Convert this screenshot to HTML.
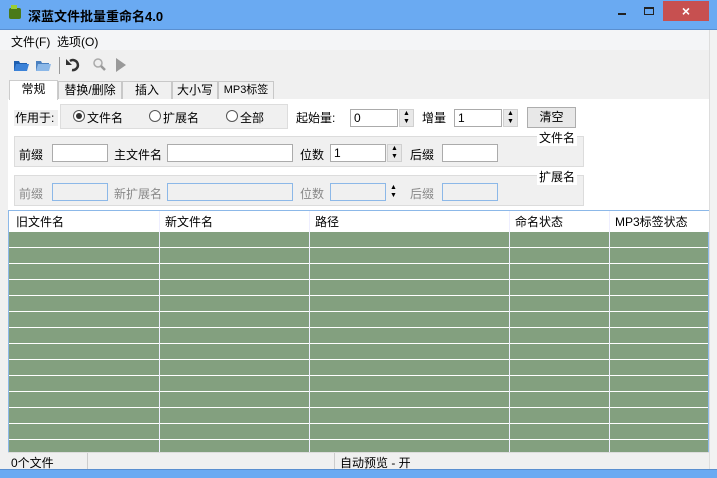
<!DOCTYPE html>
<html><head><meta charset="utf-8"><style>
*{margin:0;padding:0;box-sizing:border-box}
body{width:717px;height:478px;overflow:hidden;background:#f0f0f0;font-family:"Liberation Sans","Noto Sans CJK SC","WenQuanYi Zen Hei",sans-serif;font-size:12px;color:#000;position:relative}
.a{position:absolute}
.title{left:0;top:0;width:717px;height:30px;background:#6aaaf2;border-bottom:1px solid #5a8fd0}
.inp{position:absolute;height:18px;background:#fff;border:1px solid #ababab;padding-left:3px;line-height:16px;font-size:12px}
.dis{background:#f0f0f0;border-color:#8cb8e8}
.spin{position:absolute;width:15px;height:18px;background:#e8e8e8;border:1px solid #d0d0d0;font-size:7px;text-align:center;line-height:8px}
.grp{position:absolute;border:1px solid #dcdcdc}
.gl{color:#888}
.tab{position:absolute;top:81px;height:18px;border:1px solid #c8c8c8;border-bottom:none;background:#f0f0f0;text-align:center;line-height:17px}
</style></head><body>
<div class="a title"></div>
<div class="a" style="left:9px;top:8px;width:12px;height:11px;background:#4a7a18;border-radius:2px"></div>
<div class="a" style="left:11px;top:5px;width:6px;height:4px;background:#9acd32"></div>
<div class="a" style="left:28px;top:6px;font-size:13px;font-weight:bold">深蓝文件批量重命名4.0</div>
<div class="a" style="left:618px;top:13px;width:8px;height:2px;background:#222"></div>
<div class="a" style="left:644px;top:7px;width:10px;height:8px;border:1px solid #222;border-top-width:2px"></div>
<div class="a" style="left:663px;top:1px;width:46px;height:20px;background:#c75050;color:#fff;text-align:center;font-size:14px;line-height:20px;font-weight:bold">×</div>
<div class="a" style="left:0;top:30px;width:709px;height:20px;background:#f4f5f7"></div>
<div class="a" style="left:709px;top:30px;width:8px;height:448px;background:#f2f2f2;border-left:1px solid #ddd"></div>
<div class="a" style="left:11px;top:33px">文件(F)&nbsp;&nbsp;选项(O)</div>
<svg class="a" style="left:12px;top:55px" width="120" height="20">
<path d="M2 6h5l1 2h7v8H2z" fill="#1e5fb0"/><path d="M4 9h13l-2 7H2z" fill="#3c82d8"/>
<path d="M24 6h5l1 2h7v8H24z" fill="#4a80c0"/><path d="M26 9h13l-2 7H24z" fill="#8cb8e8"/>
<rect x="47" y="2" width="1" height="17" fill="#999"/>
<path d="M58 6 a5 5 0 1 1 2 9" stroke="#333" stroke-width="2.5" fill="none"/><path d="M54 4v6h6z" fill="#333"/>
<circle cx="86" cy="8" r="4" stroke="#aaa" stroke-width="1.5" fill="#eee"/><path d="M89 11l4 4" stroke="#999" stroke-width="2.5"/>
<path d="M104 3l10 7-10 7z" fill="#999"/>
</svg>
<div class="a" style="left:8px;top:99px;width:701px;height:111px;background:#fff"></div>
<div class="tab" style="left:9px;top:80px;width:49px;height:20px;background:#fff;border-color:#ccc">常规</div>
<div class="tab" style="left:58px;width:64px">替换/删除</div>
<div class="tab" style="left:122px;width:50px">插入</div>
<div class="tab" style="left:172px;width:46px">大小写</div>
<div class="tab" style="left:218px;width:56px;font-size:11px">MP3标签</div>
<div class="a" style="left:14px;top:110px;width:44px;height:16px;background:#f0f0f0"></div>
<div class="a" style="left:15px;top:109px">作用于:</div>
<div class="a" style="left:60px;top:104px;width:228px;height:25px;background:#f0f0f0;border:1px solid #ddd"></div>
<div class="a" style="left:73px;top:110px;width:12px;height:12px;border:1px solid #555;border-radius:50%;background:#fff"></div>
<div class="a" style="left:76px;top:113px;width:6px;height:6px;border-radius:50%;background:#333"></div>
<div class="a" style="left:87px;top:109px">文件名</div>
<div class="a" style="left:149px;top:110px;width:12px;height:12px;border:1px solid #555;border-radius:50%;background:#fff"></div>
<div class="a" style="left:163px;top:109px">扩展名</div>
<div class="a" style="left:226px;top:110px;width:12px;height:12px;border:1px solid #555;border-radius:50%;background:#fff"></div>
<div class="a" style="left:240px;top:109px">全部</div>
<div class="a" style="left:296px;top:109px">起始量:</div>
<div class="inp" style="left:350px;top:109px;width:48px">0</div>
<div class="spin" style="left:399px;top:109px">▲<br>▼</div>
<div class="a" style="left:422px;top:109px">增量</div>
<div class="inp" style="left:454px;top:109px;width:48px">1</div>
<div class="spin" style="left:503px;top:109px">▲<br>▼</div>
<div class="a" style="left:527px;top:107px;width:49px;height:21px;border:1px solid #adadad;background:#e8e8e8;text-align:center;line-height:19px">清空</div>
<div class="grp" style="left:14px;top:136px;width:570px;height:31px;background:#f0f0f0"></div>
<div class="a" style="left:537px;top:129px;background:#fff;padding:0 2px">文件名</div>
<div class="a" style="left:19px;top:146px">前缀</div>
<div class="inp" style="left:52px;top:144px;width:56px"></div>
<div class="a" style="left:114px;top:146px">主文件名</div>
<div class="inp" style="left:167px;top:144px;width:126px"></div>
<div class="a" style="left:300px;top:146px">位数</div>
<div class="inp" style="left:330px;top:144px;width:56px">1</div>
<div class="spin" style="left:387px;top:144px">▲<br>▼</div>
<div class="a" style="left:410px;top:146px">后缀</div>
<div class="inp" style="left:442px;top:144px;width:56px"></div>
<div class="grp" style="left:14px;top:175px;width:570px;height:31px;background:#f0f0f0"></div>
<div class="a" style="left:537px;top:168px;background:#fff;padding:0 2px">扩展名</div>
<div class="a gl" style="left:19px;top:185px">前缀</div>
<div class="inp dis" style="left:52px;top:183px;width:56px"></div>
<div class="a gl" style="left:114px;top:185px">新扩展名</div>
<div class="inp dis" style="left:167px;top:183px;width:126px"></div>
<div class="a gl" style="left:300px;top:185px">位数</div>
<div class="inp dis" style="left:330px;top:183px;width:56px"></div>
<div class="a" style="left:390px;top:184px;font-size:7px;line-height:8px">▲<br>▼</div>
<div class="a gl" style="left:410px;top:185px">后缀</div>
<div class="inp dis" style="left:442px;top:183px;width:56px"></div>
<div class="a" style="left:8px;top:210px;width:701px;height:242px;border:1px solid #8cb8e8;border-bottom:none;background:repeating-linear-gradient(#fff 0 1px,#83a07f 1px 16px);background-position:0 20px;background-size:100% 16px"></div>
<div class="a" style="left:9px;top:211px;width:700px;height:20px;background:#fff;border-bottom:1px solid #ddd"></div>
<div class="a" style="left:9px;top:230px;width:700px;height:2px;background:#fff"></div>
<div class="a" style="left:159px;top:211px;width:1px;height:241px;background:#eef"></div>
<div class="a" style="left:309px;top:211px;width:1px;height:241px;background:#eef"></div>
<div class="a" style="left:509px;top:211px;width:1px;height:241px;background:#eef"></div>
<div class="a" style="left:609px;top:211px;width:1px;height:241px;background:#eef"></div>
<div class="a" style="left:16px;top:213px">旧文件名</div>
<div class="a" style="left:165px;top:213px">新文件名</div>
<div class="a" style="left:315px;top:213px">路径</div>
<div class="a" style="left:515px;top:213px">命名状态</div>
<div class="a" style="left:615px;top:213px">MP3标签状态</div>
<div class="a" style="left:8px;top:452px;width:701px;height:17px;background:#f0f0f0;border-top:1px solid #ddd"></div>
<div class="a" style="left:87px;top:453px;width:1px;height:16px;background:#ccc"></div>
<div class="a" style="left:334px;top:453px;width:1px;height:16px;background:#ccc"></div>
<div class="a" style="left:11px;top:454px">0个文件</div>
<div class="a" style="left:340px;top:454px">自动预览 - 开</div>
<div class="a" style="left:0;top:469px;width:717px;height:9px;background:#6aaaf2;border-top:1px solid #5a8fd0"></div>
</body></html>
